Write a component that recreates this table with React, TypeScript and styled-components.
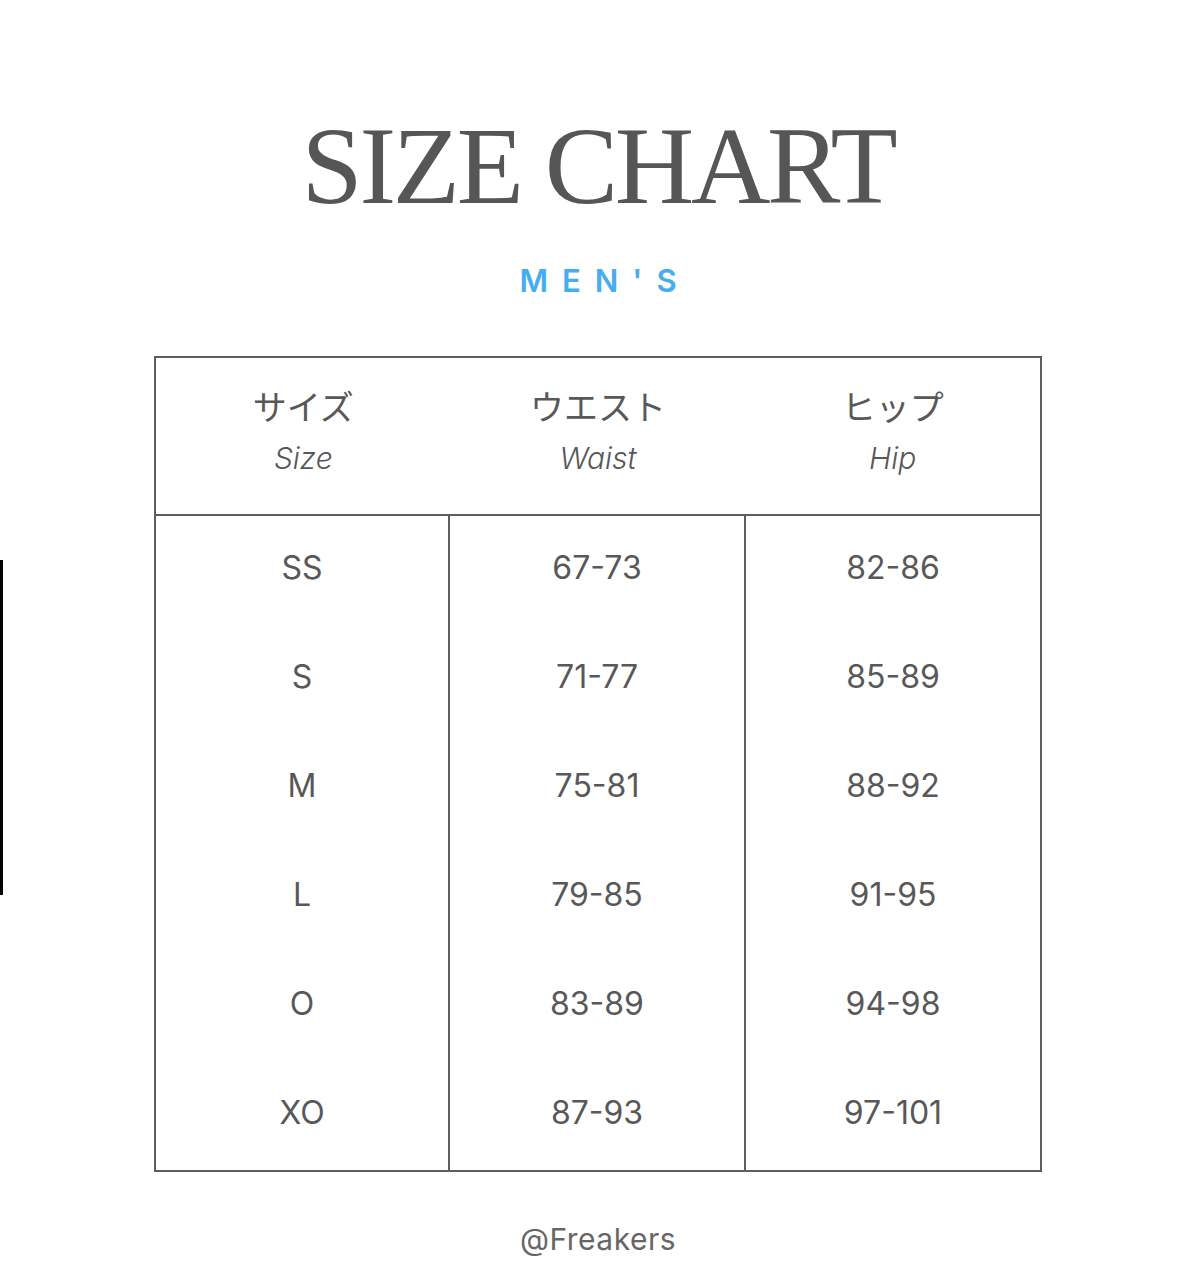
import React from "react";
import styled, { createGlobalStyle } from "styled-components";

const Global = createGlobalStyle`
  html, body { margin: 0; padding: 0; background: #ffffff; }
  body { font-family: Inter, "Noto Sans", sans-serif; }
`;

const Page = styled.div`
  position: relative;
  width: 1181px;
  min-height: 1287px;
  background: #fff;
  padding-top: 111px;
  box-sizing: border-box;
`;

const EdgeMark = styled.div`
  position: absolute;
  left: 0;
  top: 560px;
  width: 3px;
  height: 335px;
  background: #000;
`;

const Column = styled.div`
  width: 888px;
  margin-left: 154px;
  display: flex;
  flex-direction: column;
  align-items: center;
`;

const Title = styled.h1`
  margin: 0;
  font-family: "Liberation Serif", "DejaVu Serif", serif;
  font-weight: 400;
  font-size: 110px;
  line-height: 110px;
  letter-spacing: -3.3px;
  color: #565656;
  white-space: nowrap;
`;

const Subtitle = styled.h2`
  margin: 42px 0 0;
  font-family: Inter, "Noto Sans", sans-serif;
  font-weight: 600;
  font-size: 31px;
  line-height: 36px;
  letter-spacing: 14px;
  padding-left: 14px;
  color: #48adef;
`;

const Table = styled.div`
  margin-top: 57px;
  width: 888px;
  border: 2px solid #5e5e5e;
  box-sizing: border-box;
  display: flex;
  flex-direction: column;
`;

const HeaderRow = styled.div`
  display: grid;
  grid-template-columns: repeat(3, 1fr);
  height: 156px;
  border-bottom: 2px solid #5e5e5e;
`;

const HeaderCell = styled.div`
  display: flex;
  flex-direction: column;
  align-items: center;
  justify-content: center;
  gap: 12px;
  padding-bottom: 8px;
  color: #585858;
`;

const JpLabel = styled.span`
  font-family: "Noto Sans CJK JP", "Noto Sans", sans-serif;
  font-weight: 400;
  font-size: 34px;
  line-height: 40px;
`;

const EnLabel = styled.span`
  font-family: Inter, "Noto Sans", sans-serif;
  font-style: italic;
  font-weight: 300;
  font-size: 30px;
  line-height: 40px;
`;

const Body = styled.div`
  display: grid;
  grid-template-columns: 294px 296px 294px;
  grid-auto-rows: 109px;
`;

const Cell = styled.div<{ $last?: boolean }>`
  display: flex;
  align-items: center;
  justify-content: center;
  padding-bottom: 6px;
  border-right: ${(p) => (p.$last ? "none" : "2px solid #5e5e5e")};
  font-family: Inter, "Noto Sans", sans-serif;
  font-weight: 400;
  font-size: 32px;
  color: #585858;
`;

const Footer = styled.div`
  margin-top: 49px;
  font-family: Inter, "Noto Sans", sans-serif;
  font-size: 30px;
  line-height: 36px;
  color: #666;
  letter-spacing: 0.5px;
`;

const headers = [
  { jp: "サイズ", en: "Size" },
  { jp: "ウエスト", en: "Waist" },
  { jp: "ヒップ", en: "Hip" },
];

const rows = [
  ["SS", "67-73", "82-86"],
  ["S", "71-77", "85-89"],
  ["M", "75-81", "88-92"],
  ["L", "79-85", "91-95"],
  ["O", "83-89", "94-98"],
  ["XO", "87-93", "97-101"],
];

export default function App() {
  return (
    <Page>
      <Global />
      <EdgeMark />
      <Column>
        <Title>SIZE CHART</Title>
        <Subtitle>MEN'S</Subtitle>
        <Table>
          <HeaderRow>
            {headers.map((h) => (
              <HeaderCell key={h.en}>
                <JpLabel>{h.jp}</JpLabel>
                <EnLabel>{h.en}</EnLabel>
              </HeaderCell>
            ))}
          </HeaderRow>
          <Body>
            {rows.map((r) =>
              r.map((v, i) => (
                <Cell key={r[0] + i} $last={i === 2}>
                  {v}
                </Cell>
              ))
            )}
          </Body>
        </Table>
        <Footer>@Freakers</Footer>
      </Column>
    </Page>
  );
}
